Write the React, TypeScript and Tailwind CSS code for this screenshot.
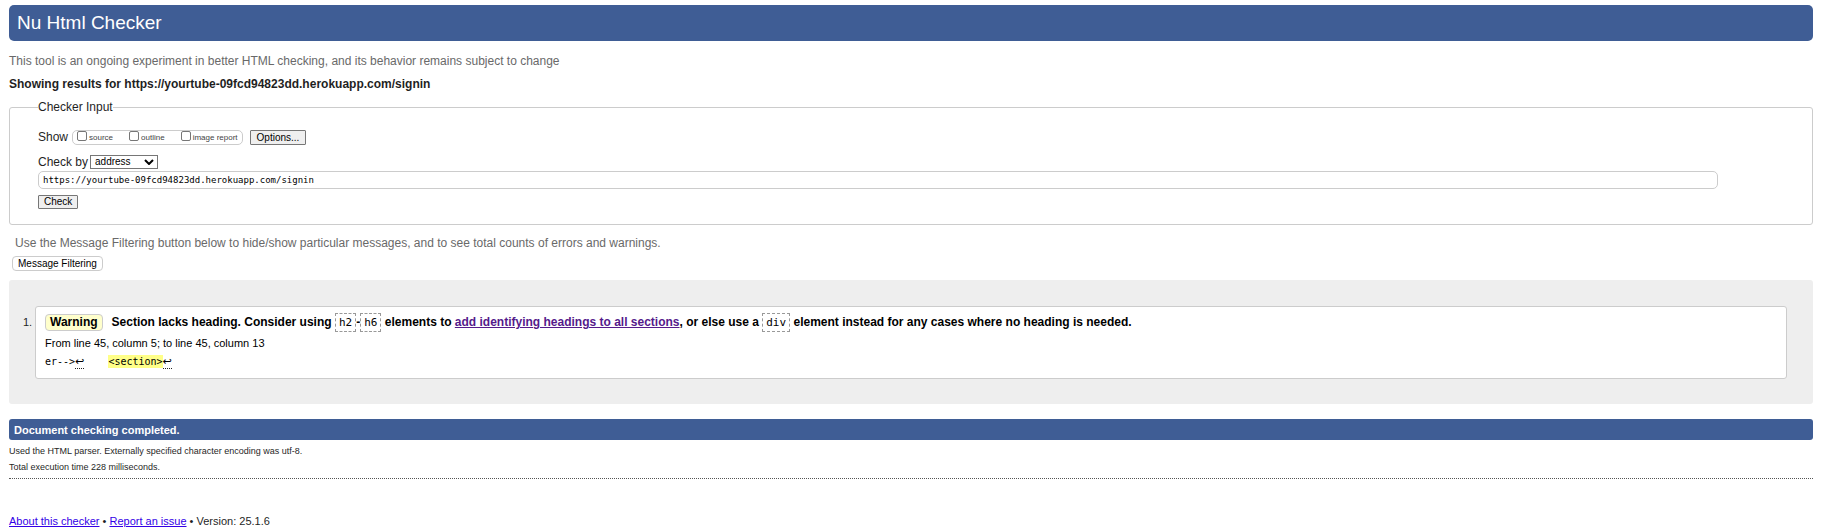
import { useState } from "react";
import type { ReactNode } from "react";

const SHOW_OPTIONS = ["source", "outline", "image report"];

function ShowOption({ label }: { label: string }) {
  return (
    <label className="flex items-start gap-[2px]">
      <input
        type="checkbox"
        className="size-[10px] appearance-none rounded-[2px] border border-[#767676] bg-white checked:bg-[#3f5d95]"
      />
      <span>{label}</span>
    </label>
  );
}

function Code({ children }: { children: ReactNode }) {
  return (
    <code className="inline-block border border-dashed border-[#999] px-[3px] font-['DejaVu_Sans_Mono',monospace] text-[11px] leading-[17px] font-normal">
      {children}
    </code>
  );
}

function LineBreakMark() {
  return (
    <span
      title="Line break"
      className="inline-block border-b border-dotted border-[#222] font-['DejaVu_Sans',sans-serif] text-[11px] leading-[13px]"
    >
      ↩
    </span>
  );
}

export default function App() {
  const [address, setAddress] = useState("https://yourtube-09fcd94823dd.herokuapp.com/signin");

  return (
    <div className="bg-white pt-[5px] pr-[15px] pl-[9px] font-['Liberation_Sans',Arial,sans-serif] text-[12px] leading-[16px] text-[#1f1f1f]">
      <header>
        <h1 className="flex h-9 items-center rounded-[5px] bg-[#3f5d95] px-2 text-[19px] text-white">
          Nu Html Checker
        </h1>
        <p className="mt-3 text-[#696969]">
          This tool is an ongoing experiment in better HTML checking, and its behavior remains subject to change
        </p>
      </header>

      <main>
        <h2 className="mt-[7px] font-bold">
          Showing results for https://yourtube-09fcd94823dd.herokuapp.com/signin
        </h2>

        <form onSubmit={(e) => e.preventDefault()}>
          <fieldset className="mt-[7px] rounded-[3px] border border-[#ccc] pr-[94px] pb-[15px] pl-7">
            <legend>Checker Input</legend>

            <div className="flex items-center pt-[14px]">
              <span>Show</span>
              <div className="ml-1 flex h-[15px] items-start gap-4 rounded-[5px] border border-[#ccc] px-1 text-[8px] leading-[14px] text-[#444]">
                {SHOW_OPTIONS.map((label) => (
                  <ShowOption key={label} label={label} />
                ))}
              </div>
              <button
                type="button"
                className="ml-[7px] h-[15px] rounded-[1px] border border-[#767676] bg-[#efefef] px-[6px] text-[10px] leading-[13px] text-black"
              >
                Options...
              </button>
            </div>

            <div className="mt-[9px] flex items-center">
              <label htmlFor="docselect">Check by</label>
              <div className="relative ml-[2px] flex">
                <select
                  id="docselect"
                  className="h-[14px] w-[68px] appearance-none border border-[#767676] bg-white pl-1 text-[10px] leading-[12px] text-black"
                >
                  <option>address</option>
                  <option>file upload</option>
                  <option>text input</option>
                </select>
                <svg
                  viewBox="0 0 10 6"
                  className="pointer-events-none absolute top-1 right-1 h-[6px] w-[10px]"
                  fill="none"
                  stroke="#000"
                  strokeWidth="2"
                >
                  <path d="M1 1l4 4 4-4" />
                </svg>
              </div>
            </div>

            <input
              type="text"
              aria-label="Address of page to check"
              value={address}
              onChange={(e) => setAddress(e.target.value)}
              className="mt-px block h-[18px] w-full rounded-[5px] border border-[#ccc] px-1 font-['DejaVu_Sans_Mono',monospace] text-[9px] text-black"
            />

            <button
              type="submit"
              className="mt-[6px] block h-[14px] rounded-[1px] border border-[#767676] bg-[#efefef] px-[5px] text-[10px] leading-[12px] text-black"
            >
              Check
            </button>
          </fieldset>
        </form>

        <p className="mt-[10px] pl-[6px] text-[#696969]">
          Use the Message Filtering button below to hide/show particular messages, and to see total counts of errors
          and warnings.
        </p>
        <button
          type="button"
          className="mt-[5px] ml-[3px] block h-[15px] rounded-[4px] border border-[#ccc] bg-white px-[5px] text-[10px] leading-[13px] text-black"
        >
          Message Filtering
        </button>

        <ol className="mt-[9px] rounded-[3px] bg-[#eee] pt-[26px] pr-[26px] pb-[25px] pl-[14px]">
          <li className="flex">
            <span className="w-3 pt-2 text-[11px]">1.</span>
            <div className="grow rounded-[3px] border border-[#ccc] bg-white px-[9px] py-[7px] text-black">
              <p className="flex h-[17px] items-center font-bold">
                <strong className="mr-[9px] rounded-[4px] border border-[#ccc] bg-[#ffc] px-1 leading-[15px]">
                  Warning
                </strong>
                <span>
                  Section lacks heading. Consider using <Code>h2</Code>-<Code>h6</Code> elements to{" "}
                  <a href="#headings" className="text-[#551a8b] underline">
                    add identifying headings to all sections
                  </a>
                  , or else use a <Code>div</Code> element instead for any cases where no heading is needed.
                </span>
              </p>
              <p className="mt-1 text-[11px]">From line 45, column 5; to line 45, column 13</p>
              <p className="mt-1 h-4 font-['DejaVu_Sans_Mono',monospace] text-[10px] leading-[13px] whitespace-pre">
                {"er-->"}
                <LineBreakMark />
                {"    "}
                <mark className="inline-block bg-[#ff8] text-black">{"<section>"}</mark>
                <LineBreakMark />
              </p>
            </div>
          </li>
        </ol>

        <p className="mt-[15px] flex h-[21px] items-center rounded-[3px] bg-[#3f5d95] px-[5px] text-[11px] font-bold text-white">
          Document checking completed.
        </p>
        <div className="mt-[3px] border-b border-dotted border-[#555] pb-[3px] text-[9px]">
          <p>Used the HTML parser. Externally specified character encoding was utf-8.</p>
          <p>Total execution time 228 milliseconds.</p>
        </div>
      </main>

      <footer className="mt-[34px] text-[11px]">
        <a href="#about" className="text-[#3300e6] underline">
          About this checker
        </a>
        {" • "}
        <a href="#issues" className="text-[#3300e6] underline">
          Report an issue
        </a>
        {" • Version: 25.1.6"}
      </footer>
    </div>
  );
}
